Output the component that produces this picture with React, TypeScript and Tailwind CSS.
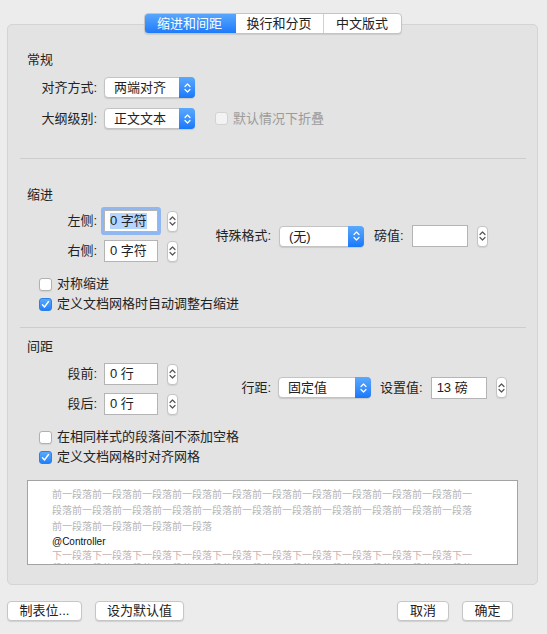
import React from "react";

function UpDown({ color }: { color: string }) {
  return (
    <svg width="7" height="12" viewBox="0 0 7 12" fill="none">
      <path d="M1 4.5 L3.5 2 L6 4.5" stroke={color} strokeWidth="1.2" strokeLinecap="round" strokeLinejoin="round" />
      <path d="M1 7.5 L3.5 10 L6 7.5" stroke={color} strokeWidth="1.2" strokeLinecap="round" strokeLinejoin="round" />
    </svg>
  );
}

function Popup({ value, width }: { value: string; width: string }) {
  return (
    <div className={`flex h-[21px] ${width} rounded-[4px] border border-[#c3c3c3] bg-white shadow-[0_1px_1px_rgba(0,0,0,0.12)]`}>
      <div className="flex flex-1 items-center pl-[9px] leading-none">{value}</div>
      <div className="-my-px -mr-px flex w-[16px] items-center justify-center rounded-r-[4px] bg-gradient-to-b from-[#5aa9fd] to-[#1878fa]">
        <UpDown color="#ffffff" />
      </div>
    </div>
  );
}

function Stepper() {
  return (
    <div className="flex h-[21px] w-[11px] items-center justify-center rounded-[4px] border border-[#c3c3c3] bg-white shadow-[0_1px_1px_rgba(0,0,0,0.08)]">
      <UpDown color="#555555" />
    </div>
  );
}

function Field({ value, width, focused }: { value: string; width: string; focused?: boolean }) {
  return (
    <div
      className={`flex h-[22px] ${width} items-center border border-[#b4b4b4] bg-white pl-[5px] ${
        focused ? "shadow-[0_0_0_3px_#8fb8f3] rounded-[1px]" : ""
      }`}
    >
      <span className={focused ? "bg-[#b4d6fe] leading-[16px]" : "leading-[16px]"}>{value}</span>
    </div>
  );
}

function Check({ checked, disabled, label }: { checked?: boolean; disabled?: boolean; label: string }) {
  return (
    <div className="flex h-[20px] items-center">
      {checked ? (
        <div className="flex h-[13px] w-[13px] items-center justify-center rounded-[3px] border border-[#2c7fe6] bg-gradient-to-b from-[#5aa9fd] to-[#1f80fb]">
          <svg width="9" height="9" viewBox="0 0 9 9" fill="none">
            <path d="M1.5 4.8 L3.5 7 L7.5 1.5" stroke="#fff" strokeWidth="1.4" strokeLinecap="round" strokeLinejoin="round" />
          </svg>
        </div>
      ) : (
        <div
          className={`h-[13px] w-[13px] rounded-[3px] border ${
            disabled ? "border-[#d3d3d3] bg-[#f3f3f3]" : "border-[#b1b1b1] bg-white shadow-[0_1px_1px_rgba(0,0,0,0.08)]"
          }`}
        />
      )}
      <span className={`ml-[5px] ${disabled ? "text-[#9b9b9b]" : ""}`}>{label}</span>
    </div>
  );
}

function Button({ label, width }: { label: string; width: string }) {
  return (
    <div className={`flex h-[20px] ${width} items-center justify-center rounded-[4px] border border-[#c6c6c6] bg-white shadow-[0_1px_1px_rgba(0,0,0,0.12)]`}>
      {label}
    </div>
  );
}

const prev = "前一段落";
const next = "下一段落";

export default function App() {
  const prevLines = [
    prev.repeat(10) + "前一",
    "段落" + prev.repeat(10),
    prev.repeat(4),
  ];
  const nextLines = [next.repeat(10) + "下一", "段落" + next.repeat(10)];

  return (
    <div className="flex h-[634px] w-[547px] flex-col overflow-hidden bg-[#ececec] font-[Liberation_Sans,Noto_Sans_CJK_SC,sans-serif] text-[13px] text-[#222]">
      <div className="mx-[7px] mt-[24px] flex h-[561px] w-[531px] flex-col rounded-[5px] border border-[#d4d4d4] bg-[#e3e3e3]">
        <div className="-mt-[12px] flex justify-center">
          <div className="flex h-[21px] overflow-hidden rounded-[4px] border border-[#c4c4c4] bg-white shadow-[0_1px_1px_rgba(0,0,0,0.1)]">
            <div className="-my-px -ml-px flex w-[92px] items-center justify-center rounded-l-[4px] bg-gradient-to-b from-[#5aa9fd] to-[#1878fa] text-white">
              缩进和间距
            </div>
            <div className="flex w-[88px] items-center justify-center border-r border-[#d0d0d0]">换行和分页</div>
            <div className="flex w-[77px] items-center justify-center">中文版式</div>
          </div>
        </div>

        <div className="mt-[16px] h-[20px] pl-[19px] leading-[20px]">常规</div>
        <div className="mt-[7px] flex items-center">
          <div className="w-[89px] text-right">对齐方式:</div>
          <div className="ml-[7px]">
            <Popup value="两端对齐" width="w-[91px]" />
          </div>
        </div>
        <div className="mt-[10px] flex items-center">
          <div className="w-[89px] text-right">大纲级别:</div>
          <div className="ml-[7px]">
            <Popup value="正文文本" width="w-[91px]" />
          </div>
          <div className="ml-[20px]">
            <Check disabled label="默认情况下折叠" />
          </div>
        </div>

        <div className="ml-[12px] mt-[29px] h-px w-[506px] bg-[#cdcdcd]" />

        <div className="mt-[26px] h-[20px] pl-[19px] leading-[20px]">缩进</div>
        <div className="mt-[5px] flex items-center">
          <div className="flex flex-col gap-[8px]">
            <div className="flex items-center">
              <div className="w-[89px] text-right">左侧:</div>
              <div className="ml-[7px]">
                <Field value="0 字符" width="w-[54px]" focused />
              </div>
              <div className="ml-[9px]">
                <Stepper />
              </div>
            </div>
            <div className="flex items-center">
              <div className="w-[89px] text-right">右侧:</div>
              <div className="ml-[7px]">
                <Field value="0 字符" width="w-[54px]" />
              </div>
              <div className="ml-[9px]">
                <Stepper />
              </div>
            </div>
          </div>
          <div className="flex items-center">
            <div className="w-[93px] text-right">特殊格式:</div>
            <div className="ml-[8px]">
              <Popup value="(无)" width="w-[85px]" />
            </div>
            <div className="ml-[10px]">磅值:</div>
            <div className="ml-[8px]">
              <Field value="" width="w-[56px]" />
            </div>
            <div className="ml-[9px]">
              <Stepper />
            </div>
          </div>
        </div>

        <div className="mt-[12px] pl-[31px]">
          <Check label="对称缩进" />
          <Check checked label="定义文档网格时自动调整右缩进" />
        </div>

        <div className="ml-[12px] mt-[13px] h-px w-[506px] bg-[#cdcdcd]" />

        <div className="mt-[9px] h-[20px] pl-[19px] leading-[20px]">间距</div>
        <div className="mt-[6px] flex items-center">
          <div className="flex flex-col gap-[8px]">
            <div className="flex items-center">
              <div className="w-[89px] text-right">段前:</div>
              <div className="ml-[7px]">
                <Field value="0 行" width="w-[54px]" />
              </div>
              <div className="ml-[9px]">
                <Stepper />
              </div>
            </div>
            <div className="flex items-center">
              <div className="w-[89px] text-right">段后:</div>
              <div className="ml-[7px]">
                <Field value="0 行" width="w-[54px]" />
              </div>
              <div className="ml-[9px]">
                <Stepper />
              </div>
            </div>
          </div>
          <div className="-mt-[3px] flex items-center">
            <div className="w-[93px] text-right">行距:</div>
            <div className="ml-[7px]">
              <Popup value="固定值" width="w-[93px]" />
            </div>
            <div className="ml-[9px]">设置值:</div>
            <div className="ml-[8px]">
              <Field value="13 磅" width="w-[56px]" />
            </div>
            <div className="ml-[9px]">
              <Stepper />
            </div>
          </div>
        </div>

        <div className="mt-[12px] pl-[31px]">
          <Check label="在相同样式的段落间不添加空格" />
          <Check checked label="定义文档网格时对齐网格" />
        </div>

        <div className="ml-[19px] mt-[13px] h-[85px] w-[491px] overflow-hidden border border-[#a3a3a3] bg-white pl-[24px] pt-[6px] text-[10px]">
          {prevLines.map((l, i) => (
            <div key={i} className="h-[16px] whitespace-nowrap leading-[16px] text-[#b5b5b5]">
              {l}
            </div>
          ))}
          <div className="h-[14px] whitespace-nowrap leading-[14px] text-[#111]">@Controller</div>
          {nextLines.map((l, i) => (
            <div key={i} className="h-[13px] whitespace-nowrap leading-[13px] text-[#c8b0b0]">
              {l}
            </div>
          ))}
        </div>
      </div>

      <div className="mt-[16px] flex items-center pl-[7px] pr-[34px]">
        <Button label="制表位..." width="w-[75px]" />
        <div className="ml-[13px]">
          <Button label="设为默认值" width="w-[89px]" />
        </div>
        <div className="flex-1" />
        <Button label="取消" width="w-[52px]" />
        <div className="ml-[13px]">
          <Button label="确定" width="w-[51px]" />
        </div>
      </div>
    </div>
  );
}
